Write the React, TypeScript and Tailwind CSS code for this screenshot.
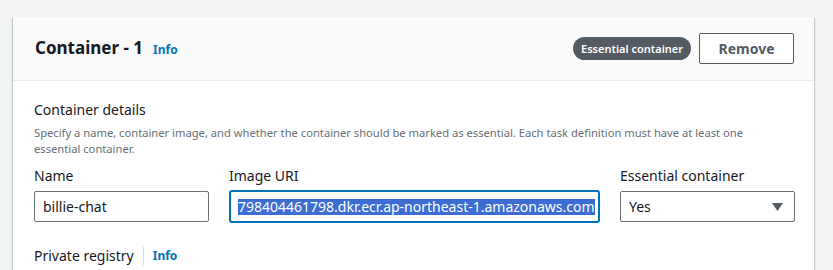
import React from "react";

export default function App() {
  return (
    <div
      className="w-[833px] h-[270px] overflow-hidden bg-[#f2f3f3] pt-[17px] pl-[13px]"
      style={{ fontFamily: '"Noto Sans", "Open Sans", Arial, sans-serif' }}
    >
      <div className="w-[801px] bg-white shadow-[0_1px_1px_0_rgba(0,28,36,0.3),1px_1px_1px_0_rgba(0,28,36,0.15),-1px_1px_1px_0_rgba(0,28,36,0.15)]">
        {/* Header */}
        <div className="h-[64px] bg-[#fafafa] border-b border-[#eaeded] flex items-center pl-[22px] pr-[20px]">
          <div className="flex items-baseline gap-[10px] pb-[2px]">
            <span className="text-[17px] leading-[22px] font-bold text-[#16191f]">Container - 1</span>
            <span className="text-[12px] font-bold text-[#0073bb]">Info</span>
          </div>
          <div className="ml-auto flex items-center gap-[8px]">
            <span className="h-[23px] px-[8px] rounded-full bg-[#545b64] text-white text-[11px] font-semibold flex items-center leading-none">
              Essential container
            </span>
            <button className="w-[95px] h-[31px] border border-[#545b64] rounded-[2px] bg-white text-[14px] font-bold text-[#545b64] flex items-center justify-center">
              Remove
            </button>
          </div>
        </div>

        {/* Body */}
        <div className="pl-[21px] pt-[19px]">
          <div className="text-[14px] leading-[20px] text-[#16191f]">Container details</div>
          <div className="text-[11.2px] leading-[16px] text-[#687078] mt-[5px]">
            Specify a name, container image, and whether the container should be marked as essential. Each task definition must have at least one
            <br />
            essential container.
          </div>

          <div className="grid grid-cols-[175px_371px_175px] gap-x-[20px] mt-[9px]">
            <div className="text-[14px] leading-[20px] text-[#16191f]">Name</div>
            <div className="text-[14px] leading-[20px] text-[#16191f]">Image URI</div>
            <div className="text-[14px] leading-[20px] text-[#16191f]">Essential container</div>

            <div className="mt-[5px] h-[31px] border border-[#687078] rounded-[2px] flex items-center pl-[8px] text-[14px] text-[#16191f]">
              billie-chat
            </div>
            <div className="mt-[4px] h-[33px] border-2 border-[#0073bb] rounded-[3px] flex items-center pl-[7px] text-[14px] overflow-hidden whitespace-nowrap">
              <span className="bg-[#3b6dd2] text-white leading-[16px]">798404461798.dkr.ecr.ap-northeast-1.amazonaws.com</span>
            </div>
            <div className="mt-[5px] h-[31px] border border-[#687078] rounded-[2px] flex items-center pl-[8px] pr-[11px] text-[14px] text-[#16191f]">
              <span>Yes</span>
              <svg className="ml-auto" width="11" height="8" viewBox="0 0 11 8">
                <polygon points="0,0 11,0 5.5,8" fill="#545b64" />
              </svg>
            </div>
          </div>

          <div className="flex items-center mt-[23px] h-[20px]">
            <span className="text-[14px] leading-[20px] text-[#16191f]">Private registry</span>
            <span className="mx-[9px] w-px h-[18px] bg-[#d5dbdb]" />
            <span className="text-[12px] font-bold text-[#0073bb]">Info</span>
          </div>
          <div className="text-[11.2px] leading-[16px] text-[#687078] mt-[1px] whitespace-nowrap">
            Store credentials in Secrets Manager, and then use the credentials to reference images in private registries.
          </div>
        </div>
      </div>
    </div>
  );
}
